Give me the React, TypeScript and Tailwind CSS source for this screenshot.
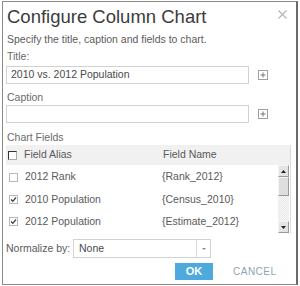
import { ReactNode } from "react";

const FONT = { fontFamily: '"Liberation Sans", Arial, sans-serif' };

const ROWS = [
  { alias: "2012 Rank", name: "{Rank_2012}", checked: false },
  { alias: "2010 Population", name: "{Census_2010}", checked: true },
  { alias: "2012 Population", name: "{Estimate_2012}", checked: true },
];

function PlusBox() {
  return (
    <svg width="10" height="10" viewBox="0 0 10 10" className="block">
      <rect x="0.5" y="0.5" width="9" height="9" fill="#fff" stroke="#a0a0a0" />
      <path d="M2.5 5H7.5M5 2.5V7.5" stroke="#777" strokeWidth="1" />
    </svg>
  );
}

function Check({ checked, dark }: { checked?: boolean; dark?: boolean }) {
  return (
    <div
      className={`w-[9px] h-[9px] flex items-center justify-center bg-white ${
        dark ? "border border-[#333] border-r-[#aaa] border-b-[#aaa]" : "border border-[#b8b8b8]"
      }`}
    >
      {checked && (
        <svg width="7" height="7" viewBox="0 0 7 7">
          <path d="M1 3.5L2.8 5.3L6 1.5" fill="none" stroke="#444" strokeWidth="1.3" />
        </svg>
      )}
    </div>
  );
}

function Label({ children, className = "" }: { children: ReactNode; className?: string }) {
  return <div className={`h-[12px] leading-[12px] text-[10.5px] text-[#6a6a6a] ${className}`}>{children}</div>;
}

function ScrollBtn({ up }: { up?: boolean }) {
  return (
    <div className="h-[12px] w-[11px] bg-[#e4e4e4] border border-[#999] border-t-[#f4f4f4] border-l-[#f4f4f4] flex items-center justify-center">
      <svg width="5" height="3" viewBox="0 0 5 3">
        <path d={up ? "M0 3L2.5 0L5 3Z" : "M0 0L2.5 3L5 0Z"} fill="#222" />
      </svg>
    </div>
  );
}

export default function App() {
  return (
    <div className="w-[300px] h-[286px] bg-white overflow-hidden" style={FONT}>
      <div className="ml-[2px] mt-[1px] w-[296px] h-[284px] border border-[#8a8a8a] border-r-[#6a6a6a] border-r-2 pl-[3px] relative">
        <svg width="9" height="9" viewBox="0 0 9 9" className="absolute right-[9px] top-[8px]">
          <path d="M0.5 0.5L8.5 8.5M8.5 0.5L0.5 8.5" stroke="#b4b4b4" strokeWidth="1.1" />
        </svg>

        <div className="mt-[4px] h-[22px] leading-[22px] text-[18.5px] text-[#3c3c3c] pl-[1px]">
          Configure Column Chart
        </div>
        <div className="mt-[5px] h-[12px] leading-[12px] text-[10.5px] text-[#5c5c5c] pl-[1px]">
          Specify the title, caption and fields to chart.
        </div>

        <Label className="mt-[5px] pl-[1px]">Title:</Label>
        <div className="mt-[4px] flex items-center">
          <div className="w-[243px] h-[18px] border border-[#d2d2d2] flex items-center pl-[4px] text-[10.5px] text-[#4a4a4a]">
            2010 vs. 2012 Population
          </div>
          <div className="ml-[9px]">
            <PlusBox />
          </div>
        </div>

        <Label className="mt-[7px] pl-[1px]">Caption</Label>
        <div className="mt-[2px] flex items-center">
          <div className="w-[243px] h-[18px] border border-[#d2d2d2]" />
          <div className="ml-[9px]">
            <PlusBox />
          </div>
        </div>

        <Label className="mt-[8px] pl-[1px]">Chart Fields</Label>

        <div className="mt-[2px] w-[285px] border-r border-[#dcdcdc] text-[10.5px] text-[#5a5a5a]">
          <div className="h-[20px] bg-[#f1f1f1] flex items-center">
            <div className="ml-[2px]">
              <Check dark />
            </div>
            <div className="ml-[7px] w-[139px]">Field Alias</div>
            <div>Field Name</div>
          </div>
          <div className="h-[68px] flex">
            <div className="flex-1 flex flex-col pt-[1px]">
              {ROWS.map((r) => (
                <div key={r.alias} className="h-[23px] flex items-center">
                  <div className="ml-[3px]">
                    <Check checked={r.checked} />
                  </div>
                  <div className="ml-[7px] w-[137px]">{r.alias}</div>
                  <div>{r.name}</div>
                </div>
              ))}
            </div>
            <div className="w-[11px] mr-[1px] flex flex-col">
              <ScrollBtn up />
              <div className="h-[19px] bg-[#dedede] border border-[#999] border-t-[#f4f4f4] border-l-[#f4f4f4]" />
              <div className="flex-1 bg-[repeating-conic-gradient(#e6e6e6_0%_25%,#fafafa_0%_50%)] bg-[length:2px_2px]" />
              <ScrollBtn />
            </div>
          </div>
        </div>

        <div className="mt-[6px] flex items-center">
          <div className="text-[10.5px] text-[#5a5a5a] w-[67px]">Normalize by:</div>
          <div className="w-[138px] h-[19px] border border-[#d2d2d2] flex items-center">
            <div className="flex-1 pl-[5px] text-[10.5px] text-[#4a4a4a]">None</div>
            <div className="w-[14px] h-full border-l border-[#dcdcdc] flex items-center justify-center">
              <svg width="4" height="2" viewBox="0 0 4 2">
                <path d="M0 0L2 2L4 0Z" fill="#888" />
              </svg>
            </div>
          </div>
        </div>

        <div className="mt-[5px] flex items-center">
          <div className="ml-[169px] w-[38px] h-[17px] bg-[#4ea9dd] text-white text-[11px] font-bold flex items-center justify-center">
            OK
          </div>
          <div className="ml-[20px] text-[10px] tracking-[0.5px] text-[#8ea3b3]">CANCEL</div>
        </div>
      </div>
    </div>
  );
}
